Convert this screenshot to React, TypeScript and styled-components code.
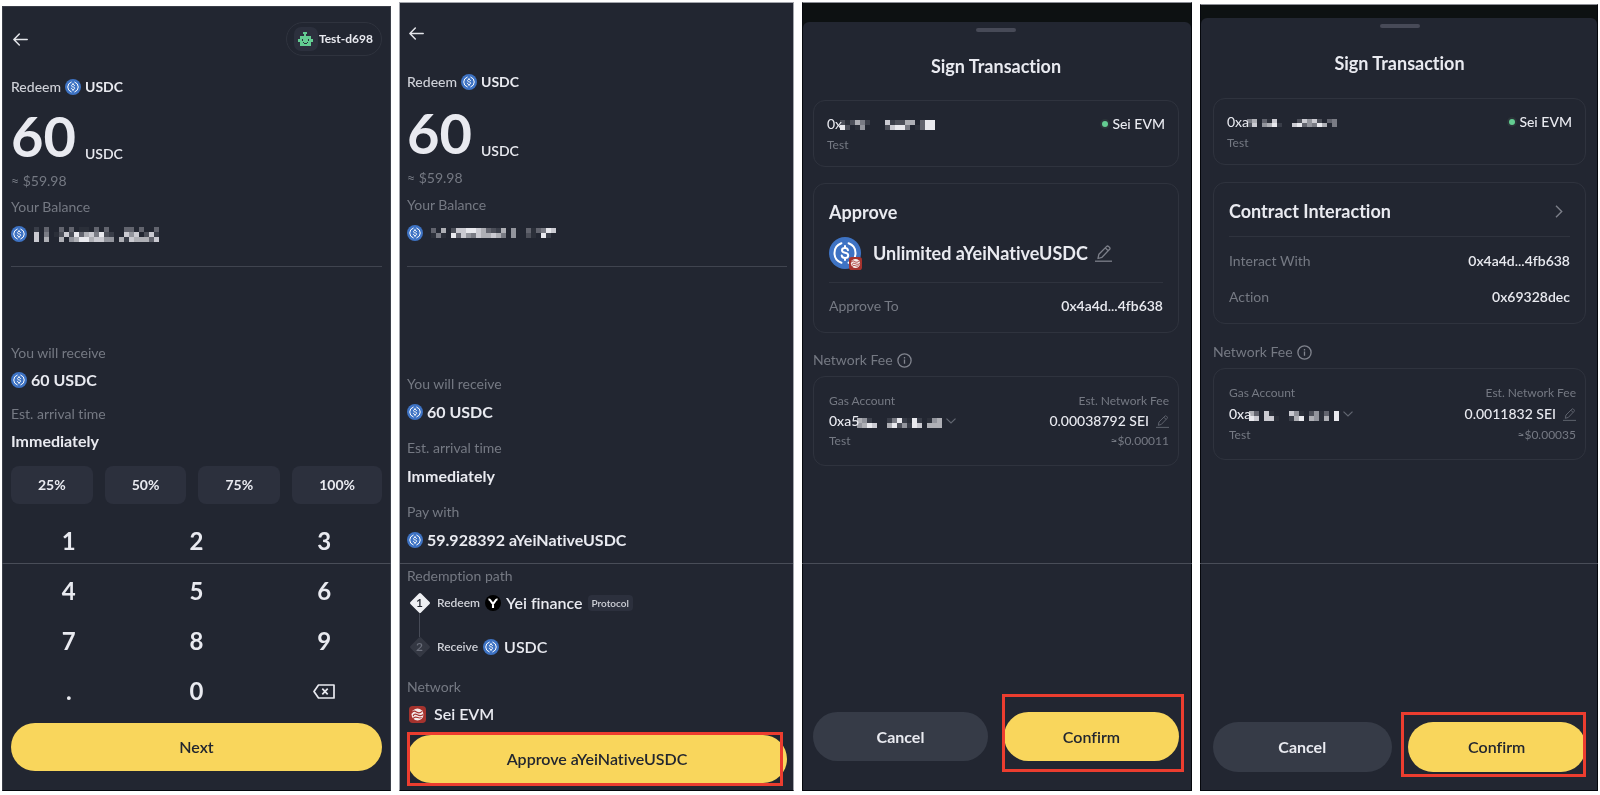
import React from 'react';
import styled, { createGlobalStyle, css } from 'styled-components';

const c = {
  bg: '#222631',
  line: '#2f333e',
  divider: '#40444f',
  text: '#e9eaf0',
  soft: '#cfd1d8',
  muted: '#757983',
  fill: '#2c303d',
  cancel: '#363b47',
  yellow: '#f9d65c',
  green: '#63cd92',
  red: '#ec3d2f',
};

const GlobalStyle = createGlobalStyle`
  * { box-sizing: border-box; }
  body {
    margin: 0;
    background: #fff;
    color: ${c.text};
    font-family: Lato, "Liberation Sans", sans-serif;
    font-size: 14px;
    line-height: 20px;
    font-variant-ligatures: none;
  }
  button { font: inherit; color: inherit; border: 0; background: none; padding: 0; cursor: pointer; }
  h2, h3, p, dl, dd, dt, ol { margin: 0; padding: 0; font-weight: inherit; }
  svg { display: block; flex: none; }
`;

/* ---------- page and panels ---------- */

const Board = styled.main`
  position: relative;
  display: grid;
  grid-template-columns: 389fr 395fr 390fr 398fr;
  gap: 8px;
  min-height: 100vh;
  padding: 0 2px 4px;
`;

const panelBase = css<{ $top: number }>`
  display: flex;
  flex-direction: column;
  min-width: 0;
  margin-top: ${(p) => p.$top}px;
`;

const Screen = styled.section<{ $top: number; $left: number; $right: number; $edge: string }>`
  ${panelBase}
  padding: 15px ${(p) => p.$right}px 0 ${(p) => p.$left}px;
  background: ${c.bg};
  border: 1px solid ${(p) => p.$edge};
  border-bottom-color: #05070c;
`;

const Backdrop = styled.section<{ $top: number; $reveal: number }>`
  ${panelBase}
  padding-top: ${(p) => p.$reveal}px;
  background: #0d1112;
  border: 1px solid #05070c;
  border-top-color: #8c8e95;
`;

const Sheet = styled.div<{ $left: number; $right: number; $bottom: number }>`
  flex: 1;
  display: flex;
  flex-direction: column;
  padding: 6px ${(p) => p.$right}px ${(p) => p.$bottom}px ${(p) => p.$left}px;
  background: ${c.bg};
  border-radius: 6px 6px 0 0;
`;

const Seam = styled.div`
  position: absolute;
  top: 563px;
  left: 2px;
  right: 2px;
  height: 1px;
  background: #494d58;
  mix-blend-mode: lighten;
  pointer-events: none;
`;

/* ---------- shared pieces ---------- */

const Label = styled.p`
  color: ${c.muted};
`;

const Small = styled.p`
  color: ${c.muted};
  font-size: 12px;
  line-height: 16px;
  font-weight: 400;
`;

const Inline = styled.div<{ $gap?: number }>`
  display: flex;
  align-items: center;
  gap: ${(p) => p.$gap ?? 4}px;
  min-height: 20px;
`;

const Value = styled(Inline)`
  font-size: 16px;
  font-weight: 700;
`;

const Field = styled.div<{ $gap: number }>`
  display: flex;
  flex-direction: column;
  gap: ${(p) => p.$gap}px;
`;

const Fields = styled.div<{ $before: number; $gap: number }>`
  display: flex;
  flex-direction: column;
  gap: ${(p) => p.$gap}px;
  margin-top: ${(p) => p.$before}px;
`;

const TopBar = styled.header<{ $height: number }>`
  display: flex;
  align-items: center;
  justify-content: space-between;
  height: ${(p) => p.$height}px;
`;

const BackButton = styled.button`
  padding: 4px 2px;
`;

const AccountPill = styled.button`
  display: flex;
  align-items: center;
  gap: 1px;
  height: 34px;
  padding: 0 8px 0 7px;
  border: 1px solid ${c.line};
  border-radius: 17px;
  font-size: 12px;
  font-weight: 700;
`;

const Avatar = styled.span`
  display: grid;
  place-items: center;
  width: 24px;
  height: 24px;
  border-radius: 7px;
  background: ${c.fill};
`;

const AssetLine = styled(Inline)<{ $before: number }>`
  margin-top: ${(p) => p.$before}px;
  color: ${c.soft};
  font-weight: 500;
`;

const Strong = styled.span`
  font-weight: 700;
  color: ${c.text};
`;

const Amount = styled.div<{ $before: number }>`
  display: flex;
  align-items: flex-end;
  gap: 9px;
  margin: ${(p) => p.$before}px 0 7px;
  font-weight: 600;
`;

const AmountNumber = styled.span`
  font-size: 56px;
  line-height: 56px;
  font-weight: 700;
`;

const Balance = styled.div<{ $gap: number }>`
  display: flex;
  flex-direction: column;
  gap: ${(p) => p.$gap}px;
  margin-top: ${(p) => p.$gap - 1}px;
  padding-bottom: ${(p) => p.$gap + 15}px;
  border-bottom: 1px solid ${c.divider};
`;

const Primary = styled.button<{ $height: number }>`
  width: 100%;
  height: ${(p) => p.$height}px;
  border-radius: 25px;
  background: ${c.yellow};
  color: #22262f;
  font-size: 16px;
  font-weight: 600;
`;

const Cancel = styled(Primary)`
  background: ${c.cancel};
  color: ${c.text};
  font-weight: 700;
`;

/* Red annotation frame drawn over the control that has to be pressed. */
const Marked = styled.div<{ $inset: string }>`
  position: relative;
  &::after {
    content: '';
    position: absolute;
    inset: ${(p) => p.$inset};
    border: 3px solid ${c.red};
    pointer-events: none;
  }
`;

/* ---------- amount entry ---------- */

const Percents = styled.div`
  display: flex;
  gap: 12px;
  margin-top: 15px;
`;

const Percent = styled.button`
  flex: 1 1 auto;
  height: 38px;
  border-radius: 8px;
  background: ${c.fill};
  font-weight: 700;
`;

const Keypad = styled.div`
  display: grid;
  grid-template-columns: repeat(3, 1fr);
  grid-auto-rows: 50px;
  margin: 12px -6px 7px;
`;

const Key = styled.button`
  display: grid;
  place-items: center;
  font-size: 24px;
  font-weight: 700;
`;

/* ---------- redemption path ---------- */

const Steps = styled.ol`
  display: flex;
  flex-direction: column;
  margin-top: 6px;
  list-style: none;
`;

const Step = styled.li`
  position: relative;
  display: flex;
  align-items: center;
  gap: 5px;
  height: 22px;
  font-size: 12px;
  font-weight: 600;
  color: ${c.soft};

  & + & {
    margin-top: 22px;
  }
  & + &::before {
    content: '';
    position: absolute;
    left: 12px;
    bottom: 21px;
    height: 24px;
    border-left: 1px solid #474b57;
  }
`;

const Marker = styled.span<{ $active?: boolean }>`
  display: grid;
  place-items: center;
  width: 25px;
  font-size: 12px;
  color: ${(p) => (p.$active ? '#22262f' : '#6b6f7b')};
  & > * {
    grid-area: 1 / 1;
  }
`;

const StepName = styled.span`
  font-size: 16px;
  font-weight: 600;
  color: ${c.text};
`;

const Tag = styled.span`
  padding: 0 4px;
  border-radius: 4px;
  background: ${c.fill};
  font-size: 10px;
  line-height: 16px;
`;

const NetworkField = styled(Field)`
  margin: 19px 0 11px;
`;

const NetworkName = styled(Inline)`
  padding-left: 2px;
`;

/* ---------- transaction sheet ---------- */

const Handle = styled.span`
  align-self: center;
  width: 40px;
  height: 4px;
  border-radius: 2px;
  background: #474a57;
`;

const SheetTitle = styled.h2<{ $gap: number }>`
  margin: ${(p) => p.$gap}px 0;
  font-size: 18px;
  line-height: 24px;
  font-weight: 700;
  text-align: center;
`;

const cardPadding = {
  account: '13px',
  details: '16px 15px',
  fee: '16px 9px 16px 15px',
};

const Card = styled.div<{ $kind: keyof typeof cardPadding }>`
  border: 1px solid ${c.line};
  border-radius: 12px;
  padding: ${(p) => cardPadding[p.$kind]};
`;

const Cards = styled.div<{ $gap: number }>`
  display: flex;
  flex-direction: column;
  gap: ${(p) => p.$gap}px;
`;

const Split = styled.div<{ $align?: string }>`
  display: flex;
  align-items: ${(p) => p.$align ?? 'center'};
  justify-content: space-between;
`;

const CardTitle = styled.h3`
  font-size: 18px;
  line-height: 24px;
  font-weight: 700;
`;

const OpenButton = styled.button`
  padding: 4px 7px;
`;

const TokenRow = styled.div`
  display: flex;
  align-items: center;
  height: 32px;
  margin-top: 13px;
  gap: 12px;
  font-size: 18px;
  font-weight: 700;
`;

const TokenIcon = styled.span`
  position: relative;
`;

const ChainBadge = styled.span`
  position: absolute;
  right: -1px;
  bottom: -1px;
  border-radius: 4px;
`;

const Editable = styled.span<{ $gap: number }>`
  display: flex;
  align-items: center;
  gap: ${(p) => p.$gap}px;
`;

const Details = styled.dl<{ $gap: number }>`
  display: flex;
  flex-direction: column;
  gap: ${(p) => p.$gap + 2}px;
  margin-top: 13px;
  padding-top: ${(p) => p.$gap}px;
  border-top: 1px solid ${c.line};

  dt { color: ${c.muted}; }
  dd { font-weight: 600; }
`;

const AccountCopy = styled.div`
  display: flex;
  flex-direction: column;
  gap: 3px;
`;

const FeeCopy = styled.div<{ $gap: number; $end?: boolean }>`
  display: flex;
  flex-direction: column;
  align-items: ${(p) => (p.$end ? 'flex-end' : 'flex-start')};
  gap: ${(p) => p.$gap}px;
  font-weight: 500;
`;

const AccountSelect = styled.button`
  display: flex;
  align-items: center;
  gap: 4px;
  height: 20px;
`;

const Status = styled(Inline)`
  font-weight: 500;
  &::before {
    content: '';
    width: 6px;
    height: 6px;
    border-radius: 50%;
    background: ${c.green};
    box-shadow: 0 0 0 2px #2b3439;
  }
`;

const FeeHeading = styled(Inline)<{ $before: number }>`
  margin: ${(p) => p.$before}px 0 6px;
  color: ${c.muted};
`;

const Actions = styled.footer`
  display: grid;
  grid-template-columns: 1fr 1fr;
  gap: 16px;
  margin-top: auto;
`;

const Masked = styled.span<{ $drop: number }>`
  display: flex;
  align-items: center;
  svg { margin: ${(p) => p.$drop}px 0 0 -2px; }
`;

/* ---------- icons ---------- */

const ArrowBack = () => (
  <svg width="15" height="13" viewBox="0 0 15 13" fill="none" stroke="#e4e5ea" strokeWidth="1.5" strokeLinecap="round" strokeLinejoin="round">
    <path d="M14.2 6.5H1M6.3 1 .9 6.5l5.4 5.5" />
  </svg>
);

const Usdc = ({ size = 16 }: { size?: number }) => (
  <svg width={size} height={size} viewBox="0 0 32 32" fill="none" stroke="#fff" strokeLinecap="round">
    <circle cx="16" cy="16" r="16" fill="#3e73c4" stroke="none" />
    <path d="M12.4 6.2a10.4 10.4 0 0 0 0 19.6M19.6 6.2a10.4 10.4 0 0 1 0 19.6" strokeWidth="2" />
    <path d="M19 13.2c-.3-1.5-1.4-2.2-3-2.2-1.8 0-3 .9-3 2.3 0 1.5 1.1 2.1 3.1 2.5 2.1.4 3.1 1 3.1 2.6 0 1.6-1.3 2.5-3.2 2.5-1.8 0-3-.8-3.300-2.400M16 9v2M16 21v2" strokeWidth="2" />
  </svg>
);

const SeiMark = ({ size = 16 }: { size?: number }) => (
  <svg width={size} height={size} viewBox="0 0 16 16" fill="none">
    <rect width="16" height="16" rx="3.5" fill="#a5332e" />
    <circle cx="8" cy="8" r="5.600" fill="#f5eceb" />
    <path d="M2.300 6.800c1.700-2.600 3.200-2.200 4.700-1.200s3.400 1.300 5.200-.6M4 9.500c.2-2 1.900-2.300 3.800-1.300s3.900 1.100 5.700-.2M3.800 11.800c1.600-2 3-1.500 4.400-.9s2.700.5 3.600-.2" stroke="#a5332e" strokeWidth="1.100" />
  </svg>
);

const YeiMark = () => (
  <svg width="16" height="16" viewBox="0 0 16 16" fill="none">
    <circle cx="8" cy="8" r="8" fill="#000" />
    <path d="M3.500 4.300c2.700 0 2.800 4 4.500 4s1.800-4 4.500-4M8 8v5" stroke="#fff" strokeWidth="2.100" />
  </svg>
);

const Robot = () => (
  <svg width="15" height="14" viewBox="0 0 15 14" shapeRendering="crispEdges">
    <path fill={c.green} d="M5 0h4v2H8v2h5v3h2v3h-2v4H2v-4H0V7h2V4h4V2H5z" />
    <path fill={c.fill} d="M4 7h1v2H4zM10 7h1v2h-1zM5 10h1v1H5zM9 10h1v1H9zM6 11h3v1H6z" />
  </svg>
);

const Pencil = ({ size = 17, color = '#7c7f89' }: { size?: number; color?: string }) => (
  <svg width={size} height={size} viewBox="0 0 17 17" fill="none" stroke={color} strokeLinejoin="round">
    <path d="M3 13.500l.9-4.300L11.700 1.400q.9-.8 1.800 0l1.100 1.100q.8.9 0 1.800L7 12.300zM10.300 2.900l2.900 2.900" strokeWidth="1.300" />
    <path d="M0 16.200h17" strokeWidth="1.300" />
  </svg>
);

const Info = () => (
  <svg width="15" height="15" viewBox="0 0 15 15" fill="none" stroke="#81848e" strokeWidth="1.300">
    <circle cx="7.500" cy="7.500" r="6.600" />
    <path d="M7.500 6.500v4.300M7.500 4v1.400" />
  </svg>
);

const Caret = () => (
  <svg width="10" height="6" viewBox="0 0 10 6" fill="none" stroke="#636772" strokeWidth="1.200">
    <path d="M.5.6 5 5 9.500.6" />
  </svg>
);

const Next = () => (
  <svg width="8" height="13" viewBox="0 0 8 13" fill="none" stroke="#7c7f89" strokeWidth="1.400">
    <path d="M1 .8 6.700 6.500 1 12.200" />
  </svg>
);

const Erase = () => (
  <svg width="22" height="15" viewBox="0 0 22 15" fill="none" stroke="#e9eaf0" strokeWidth="1.700">
    <path d="M5.500 1H21v13H5.500L1 7.500z" strokeLinejoin="round" />
    <path d="m9.300 4.700 5.400 5.600m0-5.600-5.400 5.600" />
  </svg>
);

const Diamond = ({ fill }: { fill: string }) => (
  <svg width="22" height="22" viewBox="0 0 22 22">
    <path d="M11 2.500 19.500 11 11 19.500 2.500 11z" fill={fill} stroke={fill} strokeWidth="3" strokeLinejoin="round" />
  </svg>
);

/* Blocks that stand in for a hidden address or balance; one digit per block, 9 brightest. */
const Mosaic = ({ rows, cell = 5 }: { rows: string[]; cell?: number }) => (
  <svg width={rows[0].length * 5} height={rows.length * cell} shapeRendering="crispEdges" role="img" aria-label="Hidden">
    {rows.flatMap((row, y) =>
      [...row].map((d, x) =>
        d === '0' ? null : (
          <rect key={`${x}-${y}`} x={x * 5} y={y * cell} width={5} height={cell} fill="#e9e9ee" opacity={(Number(d) / 9) ** 1.4} />
        ),
      ),
    )}
  </svg>
);

/* ---------- screens ---------- */

const AmountHeader = ({ before, gap, rows }: { before: number; gap: number; rows: string[] }) => (
  <>
    <AssetLine $before={before}>
      <span>Redeem</span>
      <Usdc />
      <Strong>USDC</Strong>
    </AssetLine>
    <Amount $before={gap * 2 - 3}>
      <AmountNumber>60</AmountNumber>
      <span>USDC</span>
    </Amount>
    <Label>≈ $59.98</Label>
    <Balance $gap={gap}>
      <Label>Your Balance</Label>
      <Inline $gap={gap}>
        <Usdc />
        <Mosaic rows={rows} />
      </Inline>
    </Balance>
  </>
);

const ReceiveFields = ({ gap }: { gap: number }) => (
  <>
    <Field $gap={gap}>
      <Label>You will receive</Label>
      <Value><Usdc />60 USDC</Value>
    </Field>
    <Field $gap={gap}>
      <Label>Est. arrival time</Label>
      <Value>Immediately</Value>
    </Field>
  </>
);

const EntryScreen = () => (
  <Screen $top={6} $left={8} $right={8} $edge="#3a3e48">
    <TopBar $height={34}>
      <BackButton aria-label="Back"><ArrowBack /></BackButton>
      <AccountPill>
        <Avatar><Robot /></Avatar>
        Test-d698
      </AccountPill>
    </TopBar>
    <AmountHeader
      before={21}
      gap={7}
      rows={['2040040401104040004404004', '8050138394785932008680382', '8070070679978866072877748']}
    />
    <Fields $before={76} $gap={14}>
      <ReceiveFields gap={7} />
    </Fields>
    <Percents>
      {['25%', '50%', '75%', '100%'].map((p) => <Percent key={p}>{p}</Percent>)}
    </Percents>
    <Keypad>
      {['1', '2', '3', '4', '5', '6', '7', '8', '9', '.', '0'].map((k) => <Key key={k}>{k}</Key>)}
      <Key aria-label="Delete"><Erase /></Key>
    </Keypad>
    <Primary $height={48}>Next</Primary>
  </Screen>
);

const ReviewScreen = () => (
  <Screen $top={2} $left={7} $right={6} $edge="#a3a5ac">
    <TopBar $height={30}>
      <BackButton aria-label="Back"><ArrowBack /></BackButton>
    </TopBar>
    <AmountHeader
      before={24}
      gap={8}
      rows={['4070388998743270600414598', '1510948658778750600310920']}
    />
    <Fields $before={107} $gap={16}>
      <ReceiveFields gap={8} />
      <Field $gap={8}>
        <Label>Pay with</Label>
        <Value><Usdc />59.928392 aYeiNativeUSDC</Value>
      </Field>
      <Label>Redemption path</Label>
    </Fields>
    <Steps>
      <Step>
        <Marker $active><Diamond fill="#eeeff3" /><span>1</span></Marker>
        Redeem <YeiMark /> <StepName>Yei finance</StepName> <Tag>Protocol</Tag>
      </Step>
      <Step>
        <Marker><Diamond fill="#343843" /><span>2</span></Marker>
        Receive <Usdc /> <StepName>USDC</StepName>
      </Step>
    </Steps>
    <NetworkField $gap={7}>
      <Label>Network</Label>
      <NetworkName $gap={8}><SeiMark size={17} /><StepName>Sei EVM</StepName></NetworkName>
    </NetworkField>
    <Marked $inset="-3px 4px -3px 0">
      <Primary $height={48}>Approve aYeiNativeUSDC</Primary>
    </Marked>
  </Screen>
);

const AccountCard = ({ prefix, rows, cell }: { prefix: string; rows: string[]; cell: number }) => (
  <Card $kind="account">
    <Split $align="flex-start">
      <AccountCopy>
        <Masked $drop={1}>{prefix}<Mosaic rows={rows} cell={cell} /></Masked>
        <Small>Test</Small>
      </AccountCopy>
      <Status>Sei EVM</Status>
    </Split>
  </Card>
);

type FeeProps = { before: number; gap: number; prefix: string; rows: string[]; fee: string; usd: string };

const FeeSection = ({ before, gap, prefix, rows, fee, usd }: FeeProps) => (
  <>
    <FeeHeading $before={before}>Network Fee <Info /></FeeHeading>
    <Card $kind="fee">
      <Split>
        <FeeCopy $gap={gap}>
          <Small>Gas Account</Small>
          <AccountSelect>
            <Masked $drop={4}>{prefix}<Mosaic rows={rows} /></Masked>
            <Caret />
          </AccountSelect>
          <Small>Test</Small>
        </FeeCopy>
        <FeeCopy $gap={gap} $end>
          <Small>Est. Network Fee</Small>
          <Editable $gap={7}>
            {fee}
            <button aria-label="Edit fee"><Pencil size={13} color="#5e626d" /></button>
          </Editable>
          <Small>{usd}</Small>
        </FeeCopy>
      </Split>
    </Card>
  </>
);

const ApproveSheet = () => (
  <Backdrop $top={2} $reveal={19}>
    <Sheet $left={10} $right={12} $bottom={29}>
      <Handle />
      <SheetTitle $gap={22}>Sign Transaction</SheetTitle>
      <Cards $gap={16}>
        <AccountCard prefix="0x" cell={5} rows={['3137520008233770499', '9301600003899501499']} />
        <Card $kind="details">
          <CardTitle>Approve</CardTitle>
          <TokenRow>
            <TokenIcon>
              <Usdc size={32} />
              <ChainBadge><SeiMark size={13} /></ChainBadge>
            </TokenIcon>
            <Editable $gap={7}>
              Unlimited aYeiNativeUSDC
              <button aria-label="Edit allowance"><Pencil /></button>
            </Editable>
          </TokenRow>
          <Details $gap={13}>
            <Split><dt>Approve To</dt><dd>0x4a4d...4fb638</dd></Split>
          </Details>
        </Card>
      </Cards>
      <FeeSection
        before={17}
        gap={2}
        prefix="0xa5"
        rows={['76200025921920167', '67980079362980777']}
        fee="0.00038792 SEI"
        usd="≈$0.00011"
      />
      <Actions>
        <Cancel $height={49}>Cancel</Cancel>
        <Marked $inset="-18px -5px -11px -2px"><Primary $height={49}>Confirm</Primary></Marked>
      </Actions>
    </Sheet>
  </Backdrop>
);

const ContractSheet = () => (
  <Backdrop $top={4} $reveal={13}>
    <Sheet $left={12} $right={11} $bottom={18}>
      <Handle />
      <SheetTitle $gap={23}>Sign Transaction</SheetTitle>
      <Cards $gap={17}>
        <AccountCard prefix="0xa" cell={4} rows={['570418000038683045', '380679200894659705']} />
        <Card $kind="details">
          <Split>
            <CardTitle>Contract Interaction</CardTitle>
            <OpenButton aria-label="Open details"><Next /></OpenButton>
          </Split>
          <Details $gap={14}>
            <Split><dt>Interact With</dt><dd>0x4a4d...4fb638</dd></Split>
            <Split><dt>Action</dt><dd>0x69328dec</dd></Split>
          </Details>
        </Card>
      </Cards>
      <FeeSection
        before={18}
        gap={3}
        prefix="0xa"
        rows={['740810008610361409', '980881002790761709']}
        fee="0.0011832 SEI"
        usd="≈$0.00035"
      />
      <Actions>
        <Cancel $height={50}>Cancel</Cancel>
        <Marked $inset="-10px 0 -5px -7px"><Primary $height={50}>Confirm</Primary></Marked>
      </Actions>
    </Sheet>
  </Backdrop>
);

export default function App() {
  return (
    <>
      <GlobalStyle />
      <Board>
        <EntryScreen />
        <ReviewScreen />
        <ApproveSheet />
        <ContractSheet />
        <Seam />
      </Board>
    </>
  );
}
